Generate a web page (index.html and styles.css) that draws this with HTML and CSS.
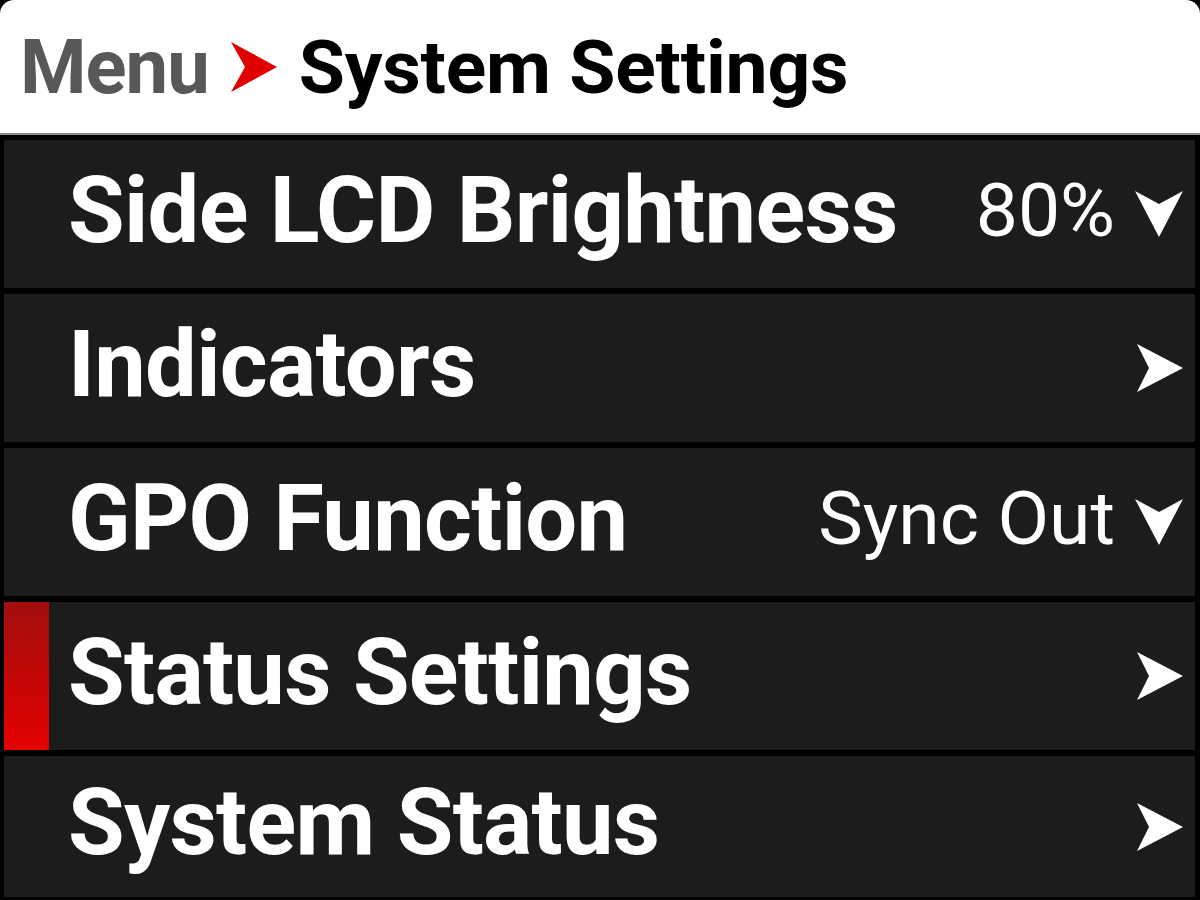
FILE: index.html
```html
<!DOCTYPE html>
<html lang="en">
<head>
    <meta charset="UTF-8">
    <title>System Settings</title>
    <link rel="stylesheet" href="styles.css">
</head>
<body>
    <div class="screen">
        <div class="header">
            <span class="crumb">Menu</span>
            <svg class="crumb-arrow" viewBox="0 0 46 50" width="46" height="50">
                <path d="M0 0 L46 25 L0 50 L14 25 Z" fill="#e00000"/>
            </svg>
            <span class="title">System Settings</span>
        </div>
        <div class="list">
            <div class="row">
                <span class="label">Side LCD Brightness</span>
                <span class="value">80%</span>
                <svg class="icon" viewBox="0 0 48 46" width="48" height="46">
                    <path d="M0 0 L24 46 L48 0 L24 13 Z" fill="#fff"/>
                </svg>
            </div>
            <div class="row">
                <span class="label">Indicators</span>
                <svg class="icon" viewBox="0 0 46 48" width="46" height="48">
                    <path d="M0 0 L46 24 L0 48 L12 24 Z" fill="#fff"/>
                </svg>
            </div>
            <div class="row">
                <span class="label">GPO Function</span>
                <span class="value">Sync Out</span>
                <svg class="icon" viewBox="0 0 48 46" width="48" height="46">
                    <path d="M0 0 L24 46 L48 0 L24 13 Z" fill="#fff"/>
                </svg>
            </div>
            <div class="row selected">
                <span class="label">Status Settings</span>
                <svg class="icon" viewBox="0 0 46 48" width="46" height="48">
                    <path d="M0 0 L46 24 L0 48 L12 24 Z" fill="#fff"/>
                </svg>
            </div>
            <div class="row last">
                <span class="label">System Status</span>
                <svg class="icon" viewBox="0 0 46 48" width="46" height="48">
                    <path d="M0 0 L46 24 L0 48 L12 24 Z" fill="#fff"/>
                </svg>
            </div>
        </div>
    </div>
</body>
</html>
```

FILE: styles.css
```css
body {
    margin: 0;
    background-color: #000000;
    font-family: Roboto, "Liberation Sans", sans-serif;
}
.screen {
    width: 1200px;
    height: 900px;
    overflow: hidden;
}
.header {
    height: 135px;
    background-color: #ffffff;
    border-bottom: 2px solid #8a8a8a;
    border-radius: 14px 14px 0 0;
    display: flex;
    align-items: center;
    padding-left: 20px;
    box-sizing: border-box;
}
.crumb {
    font-size: 76px;
    font-weight: bold;
    color: #585858;
    letter-spacing: -1px;
}
.crumb-arrow {
    margin: 0 22px 0 22px;
}
.title {
    font-size: 75px;
    font-weight: bold;
    color: #000000;
    letter-spacing: -0.2px;
}
.list {
    display: flex;
    flex-direction: column;
    gap: 6px;
    padding: 5px 5px 0 4px;
}
.row {
    height: 148px;
    background-color: #1c1c1c;
    display: flex;
    align-items: center;
    padding: 0 12px 8px 64px;
    box-sizing: border-box;
    position: relative;
    color: #ffffff;
}
.row.last {
    height: 141px;
}
.label {
    font-size: 92px;
    font-weight: bold;
    letter-spacing: -0.7px;
    flex: 1;
    white-space: nowrap;
}
.value {
    font-size: 75px;
    margin-right: 20px;
}
.icon {
    margin-top: 8px;
}
.selected::before {
    content: "";
    position: absolute;
    left: 0;
    top: 0;
    bottom: 0;
    width: 45px;
    background: linear-gradient(#a20e0e, #e50000);
}
```
